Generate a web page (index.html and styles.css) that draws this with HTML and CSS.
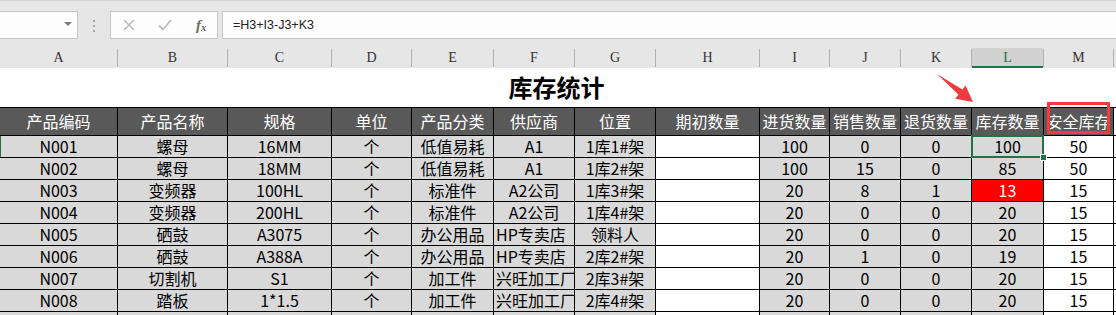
FILE: index.html
```html
<!DOCTYPE html>
<html lang="zh-CN">
<head>
    <meta charset="UTF-8">
    <title>库存统计</title>
    <link rel="stylesheet" href="styles.css">
</head>
<body>
    <div class="formula-bar">
        <div class="name-box"><span class="dropdown"></span></div>
        <div class="grip"><i></i><i></i><i></i></div>
        <div class="fx-tools">
            <svg class="tool" width="12" height="12" viewBox="0 0 12 12"><path d="M1 1 L11 11 M11 1 L1 11" stroke="#bcbcbc" stroke-width="1.6" fill="none"/></svg>
            <svg class="tool" width="14" height="12" viewBox="0 0 14 12"><path d="M1 6.5 L5 10.5 L13 1" stroke="#bcbcbc" stroke-width="1.8" fill="none"/></svg>
            <span class="fx">f<sub>x</sub></span>
        </div>
        <div class="formula">=H3+I3-J3+K3</div>
    </div>

    <div class="col-heads">
        <div>A</div><div>B</div><div>C</div><div>D</div><div>E</div><div>F</div><div>G</div>
        <div>H</div><div>I</div><div>J</div><div>K</div><div class="active">L</div><div>M</div><div></div>
    </div>

    <div class="title">库存统计</div>
    <div class="grid" id="grid"></div>

    <svg class="arrow" width="1116" height="315" viewBox="0 0 1116 315">
        <polygon points="937,74 962.4,89.6 965.6,85.6 973,102 955.2,98.7 958.4,94.6" fill="#f03c3c"/>
    </svg>
    <div class="mark"></div>

    <script>
        const header = ['产品编码', '产品名称', '规格', '单位', '产品分类', '供应商', '位置', '期初数量', '进货数量', '销售数量', '退货数量', '库存数量', '安全库存'];
        const rows = [
            ['N001', '螺母', '16MM', '个', '低值易耗', 'A1', '1库1#架', '', '100', '0', '0', '100', '50'],
            ['N002', '螺母', '18MM', '个', '低值易耗', 'A1', '1库2#架', '', '100', '15', '0', '85', '50'],
            ['N003', '变频器', '100HL', '个', '标准件', 'A2公司', '1库3#架', '', '20', '8', '1', '13', '15'],
            ['N004', '变频器', '200HL', '个', '标准件', 'A2公司', '1库4#架', '', '20', '0', '0', '20', '15'],
            ['N005', '硒鼓', 'A3075', '个', '办公用品', 'HP专卖店', '领料人', '', '20', '0', '0', '20', '15'],
            ['N006', '硒鼓', 'A388A', '个', '办公用品', 'HP专卖店', '2库2#架', '', '20', '1', '0', '19', '15'],
            ['N007', '切割机', 'S1', '个', '加工件', '兴旺加工厂', '2库3#架', '', '20', '0', '0', '20', '15'],
            ['N008', '踏板', '1*1.5', '个', '加工件', '兴旺加工厂', '2库4#架', '', '20', '0', '0', '20', '15'],
            ['', '', '', '', '', '', '', '', '', '', '', '', '']
        ];

        const grid = document.getElementById('grid');

        function addCell(text, className) {
            const cell = document.createElement('div');
            cell.className = 'cell ' + className;
            cell.textContent = text;
            grid.appendChild(cell);
        }

        header.forEach(text => addCell(text, 'head'));
        addCell('', 'blank');

        rows.forEach((row, r) => {
            row.forEach((text, c) => {
                let cls = '';
                if (c === 7 || c === 12) cls = 'white';
                if (c === 5 && text.length > 4) cls = 'clip';
                if (c === 11 && Number(text) > 0 && Number(text) < Number(row[12])) cls = 'alert';
                if (c === 11 && r === 0) cls = 'selected';
                if (c === 0 && r === 0) cls = 'row-mark';
                addCell(text, cls);
            });
            addCell('', 'blank');
        });
    </script>
</body>
</html>
```

FILE: styles.css
```css
html {
    overflow: hidden;
}
body {
    margin: 0;
    width: 1116px;
    height: 315px;
    overflow: hidden;
    position: relative;
    background-color: #fff;
    font-family: "Noto Sans CJK SC", "Noto Sans", sans-serif;
    color: #000;
}

/* formula bar */
.formula-bar {
    display: flex;
    align-items: flex-start;
    height: 37px;
    padding-top: 10px;
    background-color: #e6e6e6;
    border-top: 1px solid #d2d2d2;
}
.name-box {
    position: relative;
    width: 78px;
    height: 28px;
    box-sizing: border-box;
    background-color: #fdfdfd;
    border: 1px solid #c6c6c6;
    border-left: none;
}
.dropdown {
    position: absolute;
    left: 64px;
    top: 10px;
    border-left: 4px solid transparent;
    border-right: 4px solid transparent;
    border-top: 4px solid #7a7a7a;
}
.grip {
    display: flex;
    flex-direction: column;
    gap: 3px;
    margin: 9px 0 0 15px;
    width: 17px;
}
.grip i {
    width: 2px;
    height: 2px;
    background-color: #a8a8a8;
}
.fx-tools {
    display: flex;
    align-items: center;
    width: 108px;
    height: 28px;
    box-sizing: border-box;
    background-color: #fdfdfd;
    border: 1px solid #c6c6c6;
    padding-left: 12px;
}
.tool {
    margin-right: 23px;
}
.tool + .tool {
    margin-right: 24px;
}
.fx {
    font-family: "Liberation Serif", serif;
    font-style: italic;
    font-weight: bold;
    font-size: 15px;
    color: #6a6a6a;
    line-height: 1;
}
.fx sub {
    font-size: 11px;
    vertical-align: -1px;
}
.formula {
    flex: 1;
    height: 28px;
    margin-left: 4px;
    box-sizing: border-box;
    background-color: #fdfdfd;
    border: 1px solid #c6c6c6;
    border-right: none;
    padding-left: 10px;
    font-family: "Liberation Sans", Arial, sans-serif;
    font-size: 12.5px;
    line-height: 26px;
    color: #222;
}

/* column letters */
.col-heads {
    display: grid;
    grid-template-columns: 117px 109px 103px 79px 81px 80px 80px 103px 69px 70px 70px 71px 69px 1fr;
    column-gap: 1px;
    height: 18px;
    background: linear-gradient(#e6e6e6 1px, #b2b2b2 1px);
    border-bottom: 1px solid #9f9f9f;
}
.col-heads div {
    background-color: #e6e6e6;
    text-align: center;
    font-family: "Liberation Serif", serif;
    font-size: 14px;
    line-height: 20px;
    color: #333;
}
.col-heads .active {
    background-color: #d2d2d2;
    color: #217346;
    box-shadow: inset 0 -2px 0 #217346;
}

/* sheet */
.title {
    width: 1113px;
    height: 40px;
    text-align: center;
    font-size: 24px;
    font-weight: bold;
    line-height: 40px;
}
.grid {
    display: grid;
    grid-template-columns: 117px 109px 103px 79px 81px 80px 80px 103px 69px 70px 70px 71px 69px 1fr;
    grid-template-rows: 27px;
    grid-auto-rows: 21px;
    gap: 1px;
    padding-top: 1px;
    background-color: #000;
}
.cell {
    display: flex;
    align-items: center;
    justify-content: center;
    white-space: nowrap;
    background-color: #d9d9d9;
    font-size: 16px;
    line-height: 21px;
}
.cell.head {
    background-color: #595959;
    color: #fff;
}
.cell.white, .cell.blank {
    background-color: #fff;
}
.cell.clip {
    justify-content: flex-start;
    padding-left: 2px;
    overflow: hidden;
}
.cell.alert {
    background-color: #ff0000;
    color: #fff;
}
.cell.row-mark {
    box-shadow: inset 1px 0 #217346;
}
.cell.selected {
    position: relative;
}
.cell.selected::before {
    content: "";
    position: absolute;
    top: -1px;
    left: -1px;
    right: -1px;
    bottom: -1px;
    border: 2px solid #217346;
}
.cell.selected::after {
    content: "";
    position: absolute;
    right: -4px;
    bottom: -4px;
    width: 5px;
    height: 5px;
    background-color: #217346;
    border: 1px solid #fff;
    z-index: 1;
}

/* annotations */
.arrow {
    position: absolute;
    left: 0;
    top: 0;
    pointer-events: none;
}
.mark {
    position: absolute;
    left: 1047px;
    top: 102px;
    width: 63px;
    height: 32px;
    box-sizing: border-box;
    border: 3px solid #f33b3b;
}
```
